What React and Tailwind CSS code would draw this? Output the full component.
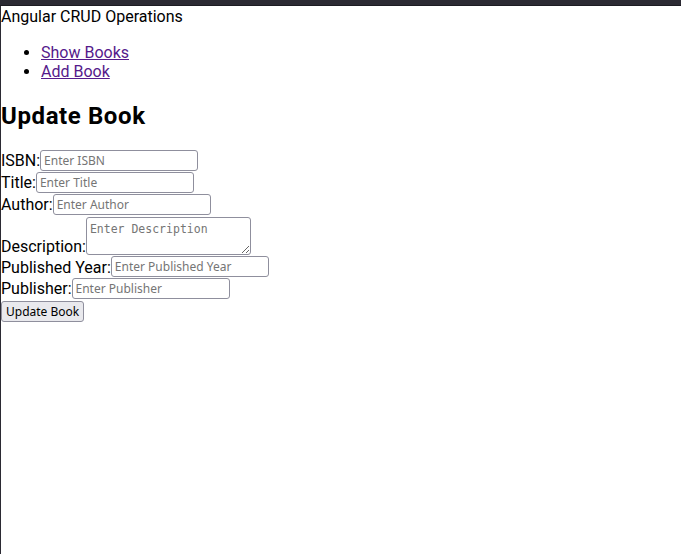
export default function App() {
  const inputCls =
    "h-[21px] px-[3px] border border-[#8f8f9d] rounded-[3px] bg-white text-[12px] font-['Noto_Sans',sans-serif] placeholder:text-[#757575] mb-[1px] w-[158px]";
  const labelCls = "mb-[2px]";

  return (
    <div className="min-h-[554px] bg-[#2b2a33] flex flex-col font-['Roboto',sans-serif] text-[16px] text-black">
      <div className="h-[6px] border-b border-[#1c1b22]" />
      <div className="flex-1 bg-white ml-px">
        <div className="leading-[19px] pt-[1px]">Angular CRUD Operations</div>

        <ul className="list-disc pl-10 mt-[17px] mb-4 leading-[19px]">
          <li>
            <a href="#" className="text-[#551a8b] underline">Show Books</a>
          </li>
          <li>
            <a href="#" className="text-[#551a8b] underline">Add Book</a>
          </li>
        </ul>

        <h2 className="text-[24px] font-bold tracking-[0.6px] leading-[28px] mt-[21px] mb-5">Update Book</h2>

        <form className="leading-[19px]">
          <div className="h-[22px] flex items-end">
            <label className={labelCls}>ISBN:</label>
            <input className={inputCls} placeholder="Enter ISBN" />
          </div>
          <div className="h-[22px] flex items-end">
            <label className={labelCls}>Title:</label>
            <input className={inputCls} placeholder="Enter Title" />
          </div>
          <div className="h-[22px] flex items-end">
            <label className={labelCls}>Author:</label>
            <input className={inputCls} placeholder="Enter Author" />
          </div>
          <div className="h-[40px] flex items-end">
            <label>Description:</label>
            <textarea
              className="w-[165px] h-[38px] px-[3px] pt-[3px] border border-[#8f8f9d] rounded-[3px] text-[11.5px] leading-[16px] font-['DejaVu_Sans_Mono',monospace] placeholder:text-[#757575] mb-[1px]"
              placeholder="Enter Description"
            />
          </div>
          <div className="h-[22px] flex items-end">
            <label className="mb-[1px]">Published Year:</label>
            <input className={inputCls} placeholder="Enter Published Year" />
          </div>
          <div className="h-[22px] flex items-end">
            <label className={labelCls}>Publisher:</label>
            <input className={inputCls} placeholder="Enter Publisher" />
          </div>
          <div className="pt-[1px]">
            <button
              type="button"
              className="h-[21px] px-[4px] border border-[#8f8f9d] rounded-[3px] bg-[#e9e9ed] text-[12px] leading-[17px] font-['Noto_Sans',sans-serif]"
            >
              Update Book
            </button>
          </div>
        </form>
      </div>
    </div>
  );
}
